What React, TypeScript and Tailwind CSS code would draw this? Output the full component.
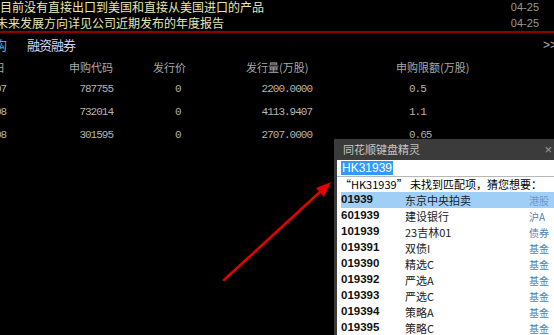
import React from "react";

const cjk = { fontFamily: '"Noto Sans CJK SC", "Liberation Sans", sans-serif' };
const mono = { fontFamily: '"Liberation Mono", "Noto Sans CJK SC", monospace' };
const sans = { fontFamily: '"Liberation Sans", "Noto Sans CJK SC", sans-serif' };

const news = [
    { text: "目前没有直接出口到美国和直接从美国进口的产品", date: "04-25", indent: "pl-0" },
    { text: "未来发展方向详见公司近期发布的年度报告", date: "04-25", indent: "-ml-[4px]" },
];

const rows = [
    { d: "07", code: "787755", price: "0", vol: "2200.0000", lim: "0.5" },
    { d: "08", code: "732014", price: "0", vol: "4113.9407", lim: "1.1" },
    { d: "08", code: "301595", price: "0", vol: "2707.0000", lim: "0.65" },
];

const matches = [
    { code: "01939", name: "东京中央拍卖", type: "港股", active: true },
    { code: "601939", name: "建设银行", type: "沪A" },
    { code: "101939", name: "23吉林01", type: "债券" },
    { code: "019391", name: "双债I", type: "基金" },
    { code: "019390", name: "精选C", type: "基金" },
    { code: "019392", name: "严选A", type: "基金" },
    { code: "019393", name: "严选C", type: "基金" },
    { code: "019394", name: "策略A", type: "基金" },
    { code: "019395", name: "策略C", type: "基金" },
];

export default function App() {
    return (
        <div className="relative w-[554px] h-[335px] overflow-hidden bg-black select-none">
            {/* news lines */}
            <div className="-mt-[1px]">
                {news.map((n, i) => (
                    <div key={i} className="flex items-center h-4 whitespace-nowrap">
                        <span className={`text-[12px] leading-4 text-[#e6e6b4] ${n.indent}`} style={cjk}>{n.text}</span>
                        <span className="ml-auto mr-[15px] text-[11px] text-[#9a9a9a]" style={sans}>{n.date}</span>
                    </div>
                ))}
            </div>
            <div className="h-[2px] bg-[#8c0000]" />

            {/* section header */}
            <div className="flex items-center h-6 whitespace-nowrap">
                <span className="-ml-[6px] text-[13px] text-[#3cb8e0]" style={cjk}>构</span>
                <span className="ml-[20px] text-[13px] text-[#d4d4fa] tracking-[-1px]" style={cjk}>融资融券</span>
                <span className="ml-auto -mr-[3px] text-[12px] text-[#b0b0b0]" style={sans}>&gt;&gt;</span>
            </div>

            {/* table */}
            <div className="text-[#a8a8a8]">
                <div className="flex items-center h-[21px] text-[11px] whitespace-nowrap" style={cjk}>
                    <span className="w-[20px] -ml-[6px]">日</span>
                    <span className="w-[99px] text-right">申购代码</span>
                    <span className="w-[133px] pl-[40px]">发行价</span>
                    <span className="w-[150px]">发行量(万股)</span>
                    <span>申购限额(万股)</span>
                </div>
                {rows.map((r, i) => (
                    <div key={i} className="flex items-center h-[23px] text-[11px] tracking-[-1px] text-[#b4b4b4] whitespace-nowrap" style={mono}>
                        <span className="w-[20px] -ml-[5px]">{r.d}</span>
                        <span className="w-[98px] text-right">{r.code}</span>
                        <span className="w-[119px] pl-[62px]">{r.price}</span>
                        <span className="w-[80px] text-right">{r.vol}</span>
                        <span className="pl-[97px]">{r.lim}</span>
                    </div>
                ))}
            </div>

            {/* keyboard wizard popup */}
            <div className="absolute left-[334px] top-[139px] w-[230px] h-[210px] flex flex-col shadow-[0_0_4px_rgba(0,0,0,0.6)]">
                <div className="flex items-center h-[21px] bg-[#3b3b3b] px-[9px]">
                    <span className="text-[11px] text-[#c6c6c6]" style={cjk}>同花顺键盘精灵</span>
                    <span className="ml-auto mr-[3px] text-[13px] text-[#9a9a9a]" style={sans}>×</span>
                </div>
                <div className="flex-1 flex flex-col bg-white border-l-[3px] border-[#3b3b3b]">
                    <div className="flex items-center h-[17px] pl-[4px] border-b border-[#b8b8b8]">
                        <span className="bg-[#3399ff] text-white text-[12px] leading-[12px] px-[1px] py-[1px]" style={sans}>HK31939</span>
                    </div>
                    <div className="flex items-center h-[15px] pl-[3px] text-[11px] text-black whitespace-nowrap" style={cjk}>
                        “HK31939” 未找到匹配项，猜您想要：
                    </div>
                    {matches.map((m) => (
                        <div key={m.code} className={`flex items-center h-4 ml-[4px] whitespace-nowrap ${m.active ? "bg-[#9fcff6]" : ""}`}>
                            <span className="w-[64px] text-[11.5px] font-bold text-[#111]" style={sans}>{m.code}</span>
                            <span className="w-[124px] text-[11px] text-[#222]" style={cjk}>{m.name}</span>
                            <span className={`text-[10px] ${m.active ? "text-[#6f98c8]" : "text-[#4d7fb8]"}`} style={cjk}>{m.type}</span>
                        </div>
                    ))}
                </div>
            </div>

            {/* red annotation arrow */}
            <svg className="absolute inset-0 pointer-events-none" width="554" height="335" viewBox="0 0 554 335">
                <line x1="224" y1="280" x2="322" y2="190" stroke="#e60000" strokeWidth="2.5" strokeLinecap="round" />
                <polygon points="331,182 316,188 324,197" fill="#e60000" />
            </svg>
        </div>
    );
}
